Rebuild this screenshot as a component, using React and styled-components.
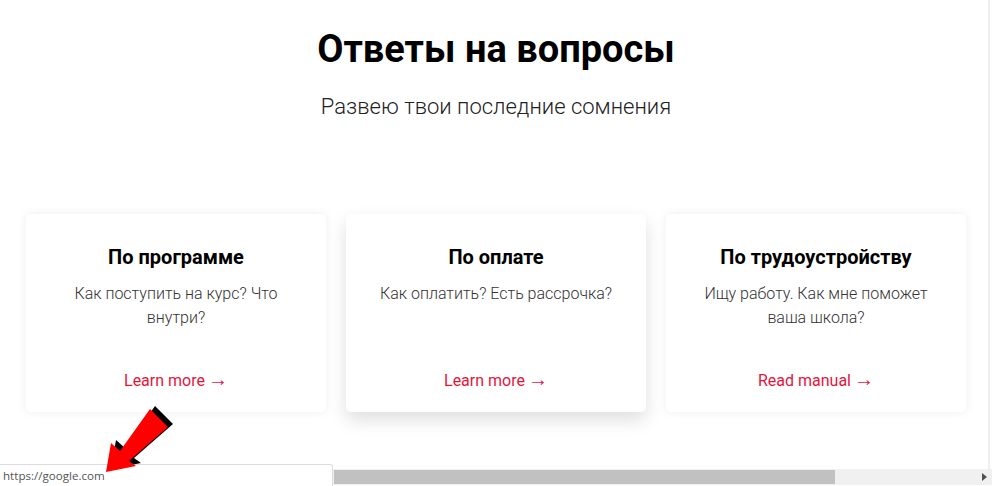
import React from "react";
import styled, { createGlobalStyle } from "styled-components";

const Global = createGlobalStyle`
  html, body { margin: 0; padding: 0; background: #fff; }
  body { font-family: Roboto, "Noto Sans", sans-serif; overflow: hidden; }
`;

const Page = styled.main`
  width: 992px;
  height: 486px;
  display: flex;
  flex-direction: column;
  align-items: center;
  position: relative;
`;

const Title = styled.h1`
  margin: 26px 0 0;
  font-size: 38px;
  line-height: 46px;
  font-weight: 700;
  color: #000;
`;

const Subtitle = styled.p`
  margin: 22px 0 0;
  font-size: 22px;
  line-height: 26px;
  font-weight: 300;
  color: #222;
`;

const Cards = styled.section`
  margin-top: 94px;
  width: 940px;
  display: grid;
  grid-template-columns: repeat(3, 300px);
  gap: 20px;
`;

const Card = styled.article`
  height: 198px;
  box-sizing: border-box;
  background: #fff;
  border-radius: 5px;
  padding: 31px 30px 19px;
  display: flex;
  flex-direction: column;
  align-items: center;
  text-align: center;
  box-shadow: ${(p) =>
    p.$active
      ? "0 8px 18px rgba(0,0,0,0.13)"
      : "0 0 10px rgba(0,0,0,0.07)"};
`;

const CardTitle = styled.h2`
  margin: 0;
  font-size: 20px;
  line-height: 24px;
  font-weight: 700;
  color: #000;
`;

const CardText = styled.p`
  margin: 13px 0 0;
  font-size: 16px;
  line-height: 24px;
  font-weight: 300;
  color: #333;
`;

const CardLink = styled.a`
  margin-top: auto;
  font-size: 16px;
  line-height: 24px;
  font-weight: 400;
  color: #e1163c;
  text-decoration: none;
`;

const LinkArrow = styled.span`
  font-size: 20px;
  line-height: 20px;
  margin-left: 3px;
`;

const StatusTip = styled.div`
  position: fixed;
  left: 0;
  bottom: 0;
  width: 333px;
  height: 22px;
  box-sizing: border-box;
  background: #fff;
  border-top: 1px solid #dcdcdc;
  border-right: 1px solid #dcdcdc;
  border-top-right-radius: 3px;
  padding: 3px 0 0 3px;
  font-family: "Open Sans", "DejaVu Sans", sans-serif;
  font-size: 11.6px;
  line-height: 16px;
  color: #555;
  z-index: 3;
`;

const HScroll = styled.div`
  position: fixed;
  left: 0;
  right: 0;
  bottom: 1px;
  height: 16px;
  background: #f0f0f0;
  z-index: 2;
`;

const Thumb = styled.div`
  position: absolute;
  left: 334px;
  width: 501px;
  top: 1px;
  height: 14px;
  background: #c1c1c1;
`;

const ScrollArrow = styled.div`
  position: absolute;
  right: 5px;
  top: 4px;
  width: 0;
  height: 0;
  border-top: 4px solid transparent;
  border-bottom: 4px solid transparent;
  border-left: 5px solid #505050;
`;

const EdgeLine = styled.div`
  position: fixed;
  top: 0;
  right: 2px;
  width: 2px;
  height: 469px;
  background: #efefef;
`;

const Pointer = styled.svg`
  position: fixed;
  left: 0;
  top: 0;
  z-index: 4;
  pointer-events: none;
`;

const arrowPts = "106,472 111,443 120,451 150,409 168,427 129,461 136,466";

export default function App() {
  const cards = [
    { t: "По программе", d: "Как поступить на курс? Что внутри?", l: "Learn more" },
    { t: "По оплате", d: "Как оплатить? Есть рассрочка?", l: "Learn more", a: true },
    { t: "По трудоустройству", d: "Ищу работу. Как мне поможет ваша школа?", l: "Read manual" },
  ];
  return (
    <>
      <Global />
      <Page>
        <Title>Ответы на вопросы</Title>
        <Subtitle>Развею твои последние сомнения</Subtitle>
        <Cards>
          {cards.map((c) => (
            <Card key={c.t} $active={c.a}>
              <CardTitle>{c.t}</CardTitle>
              <CardText>{c.d}</CardText>
              <CardLink href="#">
                {c.l}
                <LinkArrow>→</LinkArrow>
              </CardLink>
            </Card>
          ))}
        </Cards>
        <EdgeLine />
        <HScroll>
          <Thumb />
          <ScrollArrow />
        </HScroll>
        <StatusTip>https://google.com</StatusTip>
        <Pointer width="992" height="486" viewBox="0 0 992 486">
          <polygon points={arrowPts} fill="#000" transform="translate(5,-3)" />
          <polygon points={arrowPts} fill="#f00" />
        </Pointer>
      </Page>
    </>
  );
}
